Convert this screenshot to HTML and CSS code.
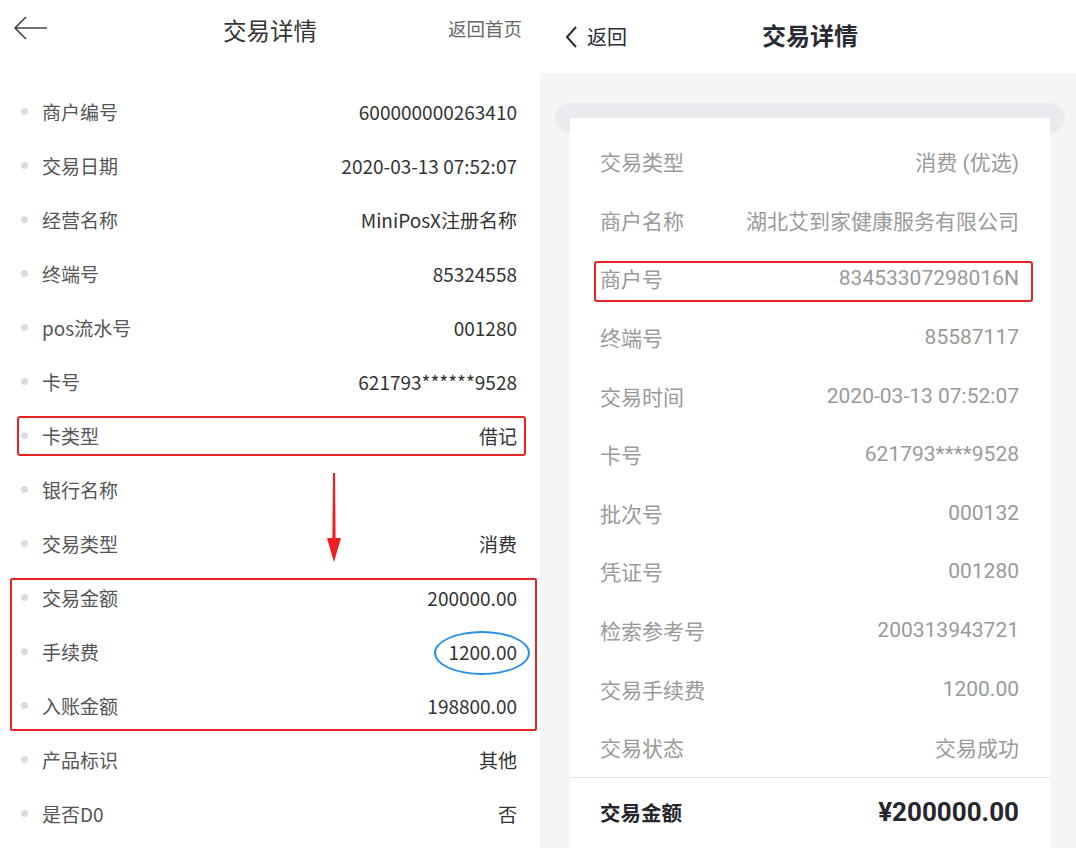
FILE: index.html
```html
<!DOCTYPE html>
<html lang="zh">
<head>
<meta charset="utf-8">
<link rel="stylesheet" href="styles.css">
</head>
<body>
<div class="page">
  <section class="left">
    <header class="lhead">
      <svg class="back-arrow" width="36" height="26" viewBox="0 0 36 26"><path d="M2 13H34M13 2L2 13L13 24" fill="none" stroke="#444" stroke-width="1.6"/></svg>
      <div class="ltitle">交易详情</div>
      <div class="home">返回首页</div>
    </header>
    <ul class="llist">
      <li><span class="dot"></span><span class="lk">商户编号</span><span class="lv">600000000263410</span></li>
      <li><span class="dot"></span><span class="lk">交易日期</span><span class="lv">2020-03-13 07:52:07</span></li>
      <li><span class="dot"></span><span class="lk">经营名称</span><span class="lv">MiniPosX注册名称</span></li>
      <li><span class="dot"></span><span class="lk">终端号</span><span class="lv">85324558</span></li>
      <li><span class="dot"></span><span class="lk">pos流水号</span><span class="lv">001280</span></li>
      <li><span class="dot"></span><span class="lk">卡号</span><span class="lv">621793******9528</span></li>
      <li><span class="dot"></span><span class="lk">卡类型</span><span class="lv">借记</span></li>
      <li><span class="dot"></span><span class="lk">银行名称</span><span class="lv"></span></li>
      <li><span class="dot"></span><span class="lk">交易类型</span><span class="lv">消费</span></li>
      <li><span class="dot"></span><span class="lk">交易金额</span><span class="lv">200000.00</span></li>
      <li><span class="dot"></span><span class="lk">手续费</span><span class="lv">1200.00</span></li>
      <li><span class="dot"></span><span class="lk">入账金额</span><span class="lv">198800.00</span></li>
      <li><span class="dot"></span><span class="lk">产品标识</span><span class="lv">其他</span></li>
      <li><span class="dot"></span><span class="lk">是否D0</span><span class="lv">否</span></li>
    </ul>
    <div class="mark box-card"></div>
    <div class="mark box-amount"></div>
    <div class="mark ellipse"></div>
    <svg class="mark red-arrow" width="20" height="92" viewBox="0 0 20 92"><path d="M9 1L11 1L11.6 66L10 90L8.4 66Z" fill="#f21d1d"/><path d="M3 66L17 66L10 90Z" fill="#f21d1d"/></svg>
  </section>

  <section class="right">
    <header class="rhead">
      <div class="rback">
        <svg width="14" height="24" viewBox="0 0 14 24"><path d="M12 2L3 12L12 22" fill="none" stroke="#2b2b36" stroke-width="2"/></svg>
        <span>返回</span>
      </div>
      <div class="rtitle">交易详情</div>
    </header>
    <div class="rbody">
      <div class="slot"></div>
      <div class="card">
        <div class="rrow"><span>交易类型</span><span>消费 (优选)</span></div>
        <div class="rrow"><span>商户名称</span><span>湖北艾到家健康服务有限公司</span></div>
        <div class="rrow"><span>商户号</span><span>83453307298016N</span></div>
        <div class="rrow"><span>终端号</span><span>85587117</span></div>
        <div class="rrow"><span>交易时间</span><span>2020-03-13 07:52:07</span></div>
        <div class="rrow"><span>卡号</span><span>621793****9528</span></div>
        <div class="rrow"><span>批次号</span><span>000132</span></div>
        <div class="rrow"><span>凭证号</span><span>001280</span></div>
        <div class="rrow"><span>检索参考号</span><span>200313943721</span></div>
        <div class="rrow"><span>交易手续费</span><span>1200.00</span></div>
        <div class="rrow"><span>交易状态</span><span>交易成功</span></div>
        <div class="total"><span class="tk">交易金额</span><span class="tv">¥200000.00</span></div>
      </div>
      <div class="mark box-merchant"></div>
    </div>
  </section>
</div>
</body>
</html>
```

FILE: styles.css
```css
* { box-sizing: border-box; }
html, body { margin: 0; padding: 0; background: #fff; }
body { width: 1076px; height: 848px; overflow: hidden; }
.page { display: flex; height: 848px; }

/* left */
.left {
  position: relative;
  width: 540px;
  background: #fff;
  font-family: "Noto Sans CJK SC", "Noto Sans", sans-serif;
}
.lhead {
  height: 64px;
  display: flex;
  align-items: center;
  justify-content: space-between;
  padding: 0 18px 2px 13px;
  position: relative;
}
.back-arrow { display: block; margin-top: -6px; }
.ltitle {
  position: absolute;
  left: 0; right: 0;
  top: 13px;
  text-align: center;
  font-size: 23.5px;
  color: #333;
  pointer-events: none;
}
.home { font-size: 18.5px; color: #666; margin-top: -6px; }
.llist { list-style: none; margin: 20px 0 0; padding: 0 23px 0 21px; }
.llist li {
  height: 54px;
  display: flex;
  align-items: center;
  font-size: 19px;
}
.dot {
  width: 7px; height: 7px;
  border-radius: 50%;
  background: #dcdcdc;
  margin-right: 14px;
  flex: none;
}
.lk { color: #555; flex: 1; }
.lv { color: #333; }

.mark { position: absolute; pointer-events: none; }
.box-card {
  left: 17px; top: 416px; width: 509px; height: 40px;
  border: 2.5px solid #e52323; border-radius: 3px;
}
.box-amount {
  left: 10px; top: 578px; width: 527px; height: 153px;
  border: 2.5px solid #e52323; border-radius: 2px;
}
.ellipse {
  left: 434px; top: 631px; width: 96px; height: 44px;
  border: 2.5px solid #2a8fe6; border-radius: 50%;
}
.red-arrow { left: 324px; top: 472px; }

/* right */
.right {
  width: 536px;
  background: #f5f5f6;
  font-family: Roboto, "Noto Sans CJK SC", sans-serif;
  display: flex;
  flex-direction: column;
  overflow: hidden;
}
.rhead {
  flex: none;
  height: 73px;
  background: #fff;
  position: relative;
  display: flex;
  align-items: center;
  padding: 0 0 0 24px;
}
.rback { display: flex; align-items: center; gap: 9px; color: #2b2b36; font-size: 20px; }
.rback svg { display: block; }
.rtitle {
  position: absolute;
  left: 0; right: 0; top: 17px;
  text-align: center;
  font-size: 24px;
  font-weight: 700;
  color: #2b2b36;
  padding-left: 4px;
}
.rbody { position: relative; flex: none; padding: 30px 11px 0 15px; }
.slot {
  height: 30px;
  border-radius: 15px;
  background: #ebebef;
}
.card {
  background: #fff;
  margin: -15px 15px 0 15px;
  padding: 14px 31px 0 30px;
  height: 740px;
}
.rrow {
  height: 58.6px;
  display: flex;
  align-items: center;
  justify-content: space-between;
  font-size: 21px;
  color: #9a9a9a;
}
.total {
  border-top: 1px solid #e6e6e6;
  margin: 0 -31px 0 -30px;
  padding: 0 31px 0 30px;
  height: 70px;
  display: flex;
  align-items: center;
  justify-content: space-between;
  color: #26262e;
  font-weight: 700;
}
.tk { font-size: 20.5px; }
.tv { font-size: 26px; }
.box-merchant {
  left: 54px; top: 188px; width: 439px; height: 41px;
  border: 2.5px solid #e52323; border-radius: 3px;
}
```
